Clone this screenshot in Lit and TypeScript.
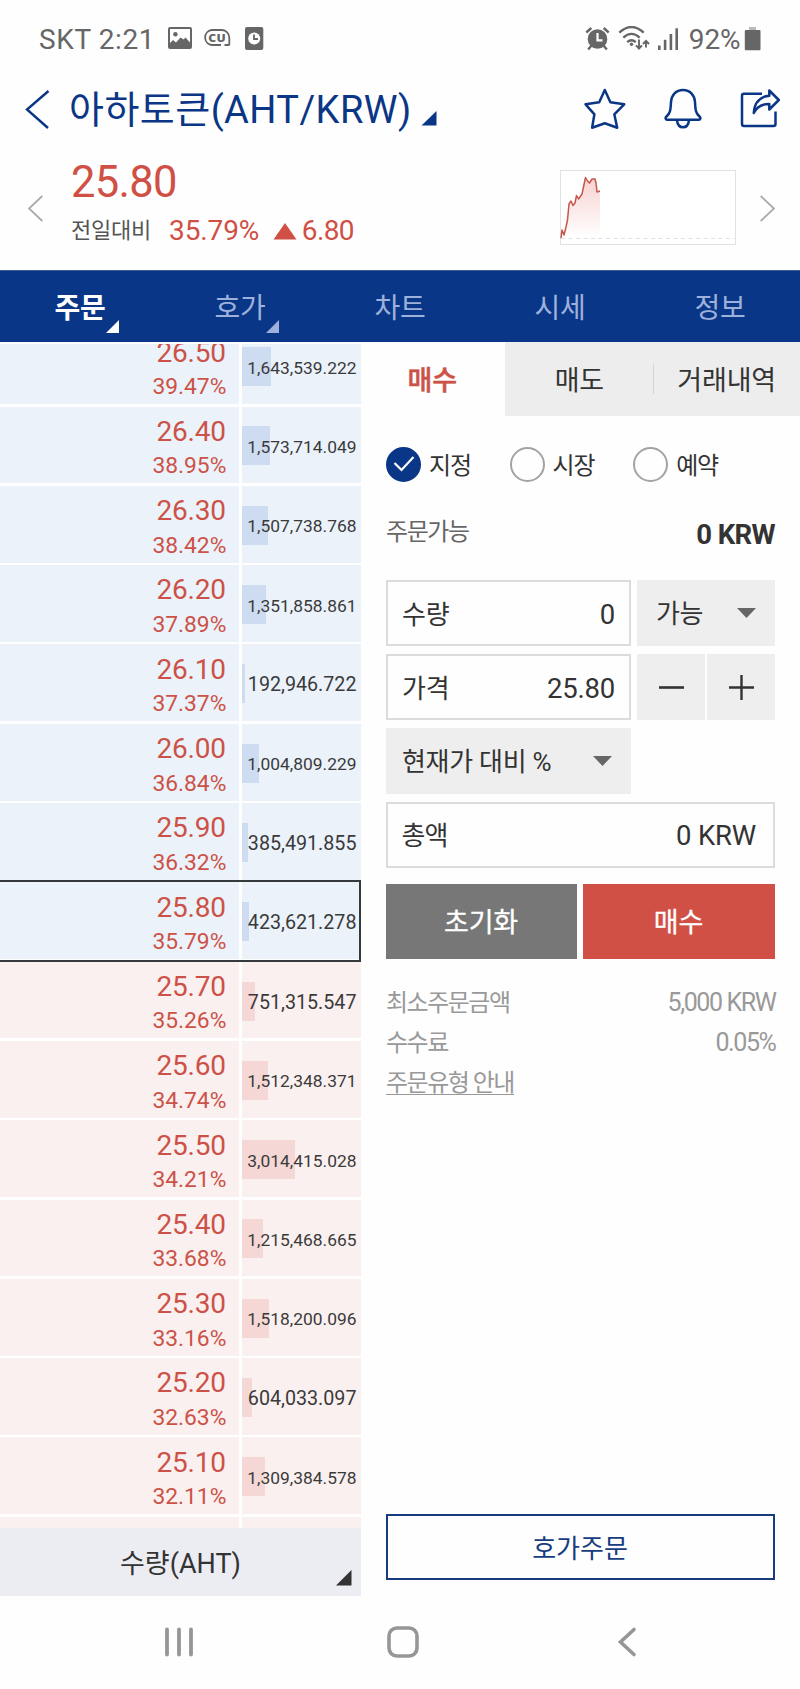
import { LitElement, html, css } from 'lit';
import { customElement, property, state } from 'lit/decorators.js';
import { classMap } from 'lit/directives/class-map.js';
import { styleMap } from 'lit/directives/style-map.js';

interface Level {
  price: string;
  rate: string;
  volume: string;
  side: 'ask' | 'bid';
  current?: boolean;
}

const LEVELS: Level[] = [
  { price: '26.50', rate: '39.47%', volume: '1,643,539.222', side: 'ask' },
  { price: '26.40', rate: '38.95%', volume: '1,573,714.049', side: 'ask' },
  { price: '26.30', rate: '38.42%', volume: '1,507,738.768', side: 'ask' },
  { price: '26.20', rate: '37.89%', volume: '1,351,858.861', side: 'ask' },
  { price: '26.10', rate: '37.37%', volume: '192,946.722', side: 'ask' },
  { price: '26.00', rate: '36.84%', volume: '1,004,809.229', side: 'ask' },
  { price: '25.90', rate: '36.32%', volume: '385,491.855', side: 'ask' },
  { price: '25.80', rate: '35.79%', volume: '423,621.278', side: 'ask', current: true },
  { price: '25.70', rate: '35.26%', volume: '751,315.547', side: 'bid' },
  { price: '25.60', rate: '34.74%', volume: '1,512,348.371', side: 'bid' },
  { price: '25.50', rate: '34.21%', volume: '3,014,415.028', side: 'bid' },
  { price: '25.40', rate: '33.68%', volume: '1,215,468.665', side: 'bid' },
  { price: '25.30', rate: '33.16%', volume: '1,518,200.096', side: 'bid' },
  { price: '25.20', rate: '32.63%', volume: '604,033.097', side: 'bid' },
  { price: '25.10', rate: '32.11%', volume: '1,309,384.578', side: 'bid' },
  { price: '', rate: '', volume: '', side: 'bid' },
];

/* Bar length in pixels per traded unit. */
const BAR_SCALE = 17.7e-6;

const CHART_LINE =
  'M561 238L562 230L564 235L566 227L567.500 220L569 204L571 201L573 205.500L575 203L576.500 195.500L578.500 199L582 194L585.500 177.500L587.500 181L589.500 183L592 179H595L596 183L597 192L600 191';

const base = css`
  * { box-sizing: border-box; }
  :host {
    display: block;
    font-family: Roboto, 'Noto Sans CJK KR', sans-serif;
    color: #333;
  }
  svg { display: block; flex: none; }
`;

@customElement('status-bar')
class StatusBar extends LitElement {
  static styles = [base, css`
    .bar { display: flex; align-items: center; height: 78px; padding: 0 38.500px 0 39px; color: #666; font-size: 28px; line-height: 40px; }
    .left, .right { display: flex; align-items: center; }
    .right { margin-left: auto; }
    .carrier { width: 129px; white-space: nowrap; letter-spacing: 0.600px; padding-top: 1px; }
    .cu { font: 800 11px 'Open Sans', sans-serif; letter-spacing: 0.2px; }
    .level { letter-spacing: -0.100px; margin: 0 3px 0 3px; padding-top: 1px; }
  `];
  render() {
    return html`<div class="bar">
      <div class="left">
        <span class="carrier">SKT 2:21</span>
        <svg width="96" height="26" viewBox="168 26 96 26">
          <path fill="#666" fill-rule="evenodd" d="M170 27h20q2 0 2 2v18q0 2-2 2h-20q-2 0-2-2V29q0-2 2-2zM170 29v14l3-3 3 2.500 4.500-5 3 2 2-2 4.500 5V29z"/>
          <circle cx="175.400" cy="34.300" r="2.200" fill="#666"/>
          <path fill="none" stroke="#666" stroke-width="1.800" d="M229.500 45h-5M229.300 45V37.500A7.600 7.600 0 0 0 222 30h-10.500a7.600 7.600 0 0 0 0 15H221"/>
          <text class="cu" x="208.300" y="41.700" fill="#666" textLength="17.500" lengthAdjust="spacingAndGlyphs">CU</text>
          <rect x="245" y="27" width="18.300" height="23" rx="2" fill="#666"/>
          <circle cx="254.200" cy="38.500" r="6" fill="#fff"/>
          <path fill="none" stroke="#666" stroke-width="1.800" d="M254 34.500v4.500h4"/>
        </svg>
      </div>
      <div class="right">
        <svg width="101" height="26" viewBox="584 25 101 26">
          <circle cx="596.500" cy="38" r="9.800" fill="#666"/>
          <path fill="none" stroke="#666" stroke-width="2.400" d="M585.300 31.500l5-4.500M607.700 31.500l-5-4.500M590.500 44.500l-3.300 4M602.500 44.500l3.300 4"/>
          <path fill="none" stroke="#fff" stroke-width="2.200" d="M596.500 32v7.300h5"/>
          <g fill="none" stroke="#666" stroke-width="2.300">
            <path d="M618.300 31.600q12.200-11.200 24.400 0M622.300 36.600q8.200-7.400 16.400 0M626.200 41.200q4.300-3.800 8.600 0"/>
            <path stroke-width="1.900" d="M638 38.500v8.500M635 44.300l3 3.200 3-3.200M645 46.500v-6.500M642 43l3-3.200 3 3.200"/>
          </g>
          <circle cx="630.500" cy="43.300" r="1.700" fill="#666"/>
          <g fill="#666"><rect x="657" y="44.500" width="2.600" height="4.500"/><rect x="662.800" y="38.800" width="2.600" height="10.200"/><rect x="668.600" y="33" width="2.600" height="16"/><rect x="674.400" y="27.300" width="2.600" height="21.700"/></g>
        </svg>
        <span class="level">92%</span>
        <svg width="18" height="26" viewBox="744.500 25 18 26">
          <rect x="749.500" y="26" width="7" height="4" fill="#bbb"/><rect x="745.300" y="29" width="15.700" height="20.200" rx="1" fill="#666"/>
        </svg>
      </div>
    </div>`;
  }
}

@customElement('title-bar')
class TitleBar extends LitElement {
  static styles = [base, css`
    .bar { display: flex; align-items: center; height: 62px; padding: 0 19px 0 25px; color: #0b3686; }
    .title { margin: 2px 0 0 19px; font-size: 38px; line-height: 50px; letter-spacing: 0.450px; white-space: nowrap; }
    .mark { margin: 18px 0 0 9px; }
    .actions { display: flex; gap: 38px; margin-left: auto; }
  `];
  render() {
    return html`<div class="bar">
      <svg width="25" height="40" viewBox="25 88 25 40"><path d="M48.500 90L27 108.500 48 127" fill="none" stroke="#0b3686" stroke-width="2.400"/></svg>
      <span class="title">아하토큰(AHT/KRW)</span>
      <svg class="mark" width="16" height="15"><path d="M0.500 14.500L15.500 0v14.500z" fill="#0b3686"/></svg>
      <div class="actions">
        <svg width="42" height="42" viewBox="584 88 42 42"><path d="M604.800 90l5.600 12.200 13.800 2.100-9.900 10 2.900 13.400-12.400-4.500-12.700 4.500 2.300-13.400-8.800-10 13.600-2.100z" fill="none" stroke="#0b3686" stroke-width="2.500" stroke-linejoin="round"/></svg>
        <svg width="38" height="42" viewBox="664 88 38 42"><g fill="none" stroke="#0b3686" stroke-width="2.500" stroke-linejoin="round"><path d="M683 90c-7 0-11.500 5-12 12-.4 8.500-1 11.500-4.500 14.500-1.600 1.500-.9 3.200.7 3.200h31.600c1.600 0 2.300-1.700.7-3.200-3.500-3-4.100-6-4.500-14.500-.5-7-5-12-12-12z"/><path d="M677 120.500c.6 4.300 2.700 6.800 6 6.800s5.400-2.500 6-6.800"/></g></svg>
        <svg width="41" height="42" viewBox="740 88 41 42"><g fill="none" stroke="#0b3686" stroke-width="2.500" stroke-linejoin="round"><path d="M762 93.700h-18q-2 0-2 2V124q0 2 2 2h29.500q2 0 2-2v-12.500"/><path d="M769.300 90.500l9.500 9.500-9.500 9.500v-5.500c-7.500 0-12.300 2.300-15.500 9 .5-9.500 5.500-16.500 15.500-17.200z"/></g></svg>
      </div>
    </div>`;
  }
}

@customElement('quote-summary')
class QuoteSummary extends LitElement {
  static styles = [base, css`
    .wrap { display: flex; height: 130.200px; padding: 0 25px 0 28px; align-items: flex-start; }
    .arrow { margin-top: 55px; }
    .info { margin-left: 28px; color: #d05045; }
    .price { font-size: 43.500px; line-height: 50px; margin-top: 18px; letter-spacing: -0.700px; }
    .change { display: flex; align-items: center; height: 34px; margin-top: 5.500px; font-size: 28px; line-height: 34px; letter-spacing: -0.100px; }
    .label { width: 98px; font-size: 22px; letter-spacing: -0.2px; color: #555; }
    .up { margin: 1px 4.500px 0 14px; }
    .chart { margin: 30px 24px 0 auto; }
    .diff { letter-spacing: -0.600px; }
  `];
  render() {
    return html`<div class="wrap">
      <svg class="arrow" width="15" height="28" viewBox="28 195 15 28"><path d="M42.300 196L29 208.500l13.300 12.500" fill="none" stroke="#aaa" stroke-width="1.800"/></svg>
      <div class="info">
        <div class="price">25.80</div>
        <div class="change">
          <span class="label">전일대비</span><span>35.79%</span>
          <svg class="up" width="24" height="17"><path d="M0.500 16.500L12 0l11.500 16.500z" fill="#d05045"/></svg>
          <span class="diff">6.80</span>
        </div>
      </div>
      <svg class="chart" width="176" height="75" viewBox="560 170 176 75">
        <defs><linearGradient id="g" x1="0" y1="0" x2="0" y2="1"><stop offset="0" stop-color="#f6d2cf"/><stop offset="1" stop-color="#fff"/></linearGradient></defs>
        <rect x="560.500" y="170.500" width="175" height="74" fill="#fff" stroke="#e2e2e2"/>
        <path d="${CHART_LINE} V234H561z" fill="url(#g)"/>
        <path d="M561 238.500h174" stroke="#e2e2e2" stroke-dasharray="4 3.500"/>
        <path d="${CHART_LINE}" fill="none" stroke="#c7564e" stroke-width="1.500" stroke-linejoin="round"/>
      </svg>
      <svg class="arrow" width="15" height="28" viewBox="760 195 15 28"><path d="M760.700 196L774 208.500 760.700 221" fill="none" stroke="#aaa" stroke-width="1.800"/></svg>
    </div>`;
  }
}

@customElement('main-tabs')
class MainTabs extends LitElement {
  @state() private active = 0;
  static styles = [base, css`
    .tabs { display: grid; grid-template-columns: repeat(5, 1fr); height: 72.100px; background: #093687; border-top: 1px solid #3b5b96; }
    .tab { position: relative; display: flex; justify-content: center; align-items: center; font-size: 28px; line-height: 40px; letter-spacing: -0.2px; color: #9db1dc; padding: 5.500px 0 0 0; }
    .on { color: #fff; font-weight: 700; }
    .mark { position: absolute; left: 106px; bottom: 9px; }
  `];
  render() {
    return html`<div class="tabs">${['주문', '호가', '차트', '시세', '정보'].map((t, i) => html`
      <div class=${classMap({ tab: true, on: i === this.active })} @click=${() => (this.active = i)}>${t}
        ${i < 2 ? html`<svg class="mark" width="13" height="13"><path d="M0 13L13 0v13z" fill="currentColor"/></svg>` : ''}
      </div>`)}</div>`;
  }
}

@customElement('order-book')
class OrderBook extends LitElement {
  @property({ attribute: false }) levels: Level[] = LEVELS;
  static styles = [base, css`
    :host { width: 361px; display: flex; flex-direction: column; padding-top: 1.700px; }
    .list { height: 1183.700px; overflow: hidden; }
    .rows { margin-top: -16.700px; }
    .row { position: relative; display: grid; grid-template-columns: 239.400px 119.300px; grid-template-rows: 76.800px; column-gap: 2.300px; margin-bottom: 2.500px; }
    .row.current::after { content: ''; position: absolute; inset: -2.500px 0 -2.500px -4px; border: 2px solid #363a3c; }
    .ask > * { background: #ebf2fa; }
    .bid > * { background: #faf0ef; }
    .quote { padding: 8.300px 13.500px 0 0; text-align: right; color: #cc5248; }
    .price { font-size: 28px; line-height: 34px; letter-spacing: -0.2px; }
    .rate { font-size: 22.800px; line-height: 30px; margin: 2.500px -0.500px 0 0; }
    .depth { display: grid; align-items: center; color: #3a3a3a; }
    .depth > * { grid-area: 1 / 1; }
    .bar { height: 39px; margin-top: 2px; }
    .ask .bar { background: #cddcf0; }
    .bid .bar { background: #f5d7d5; }
    .volume { position: relative; justify-self: end; padding-right: 4.500px; font-size: 19.700px; line-height: 24px; margin-top: 5px; }
    .volume.long { font-size: 17.400px; margin-top: 4px; }
    .unit { position: relative; display: flex; justify-content: center; align-items: center; height: 68px; background: #ecedf2; font-size: 27px; line-height: 36px; padding: 4px 0 0 0; }
    .mark { position: absolute; right: 9.500px; bottom: 10px; }
  `];
  render() {
    return html`
      <div class="list"><div class="rows">${this.levels.map((l) => html`
        <div class=${classMap({ row: true, [l.side]: true, current: !!l.current })}>
          <div class="quote"><div class="price">${l.price}</div><div class="rate">${l.rate}</div></div>
          <div class="depth">
            <div class="bar" style=${styleMap({ width: `${(Number(l.volume.replace(/,/g, '')) * BAR_SCALE).toFixed(1)}px` })}></div>
            <span class=${classMap({ volume: true, long: l.volume.length > 11 })}>${l.volume}</span>
          </div>
        </div>`)}</div></div>
      <div class="unit">수량(AHT)<svg class="mark" width="16" height="16"><path d="M0 15.500L15.500 0v15.500z" fill="#333"/></svg></div>`;
  }
}

@customElement('order-form')
class OrderForm extends LitElement {
  @state() private kind = 0;
  static styles = [base, css`
    :host { flex: 1; display: flex; flex-direction: column; }
    .tabs { display: grid; grid-template-columns: 144.300px 148px 1fr; height: 73.700px; font-size: 27px; line-height: 36px; }
    .tabs div { position: relative; display: flex; align-items: center; justify-content: center; background: #ededed; padding-top: 4.500px; letter-spacing: -0.2px; }
    .tabs .on { background: transparent; color: #cc5248; font-weight: 500; -webkit-text-stroke: 0.500px #cc5248; padding-right: 2px; }
    .tabs .split::before { content: ''; position: absolute; left: 0; top: 22px; width: 1px; height: 30px; background: #d6d6d6; }
    .body { padding: 0 25px; display: flex; flex-direction: column; }
    .kinds { display: flex; margin-top: 31px; height: 35px; }
    .kind { display: flex; align-items: center; width: 123.600px; font-size: 24px; line-height: 34px; letter-spacing: -1.200px; gap: 8px; }
    .kind .name { padding-top: 3px; }
    .dot { width: 35px; height: 35px; border-radius: 50%; border: 2px solid #a3a3a3; display: flex; align-items: center; justify-content: center; }
    .dot.on { background: #093687; border-color: #093687; }
    .avail { display: flex; justify-content: space-between; margin-top: 33px; height: 40px; line-height: 35px; font-size: 24px; letter-spacing: -1.400px; color: #666; }
    .avail b { font-size: 27.500px; line-height: 40px; letter-spacing: -0.600px; color: #333; }
    .grid { display: grid; grid-template-columns: 245px 138px; column-gap: 6px; row-gap: 8px; grid-auto-rows: 66px; margin-top: 25px; font-size: 26px; line-height: 36px; }
    .grid > * { display: flex; align-items: center; }
    .field { border: 2px solid #dcdcdc; justify-content: space-between; padding: 4px 14px 0 14px; letter-spacing: -0.200px; }
    .field .num { font-size: 27.500px; }
    .steps { gap: 2.500px; }
    .select, .step { background: #eee; }
    .select { justify-content: space-between; padding: 3px 19.500px 0 16px; letter-spacing: -0.300px; }
    .select.unit { padding-left: 19px; }
    .select svg { margin-top: -3px; }
    .step { flex: 1; height: 66px; display: flex; align-items: center; justify-content: center; padding: 1px 0 0 1px; }
    .total { grid-column: 1 / 3; letter-spacing: -0.900px; padding: 3px 17px 0 13.500px; }
    .total .num { letter-spacing: -0.200px; }
    .buttons { display: grid; grid-template-columns: 191px 1fr; gap: 6px; margin-top: 16.500px; height: 74.500px; font-size: 27px; line-height: 36px; color: #fff; }
    .buttons div { display: flex; align-items: center; justify-content: center; padding: 3px 1px 0 0; letter-spacing: -0.2px; -webkit-text-stroke: 0.300px #fff; }
    .reset { background: #777; }
    .buy { background: #d05045; }
    .notes { margin-top: 24px; color: #999; font-size: 24px; letter-spacing: -1.500px; }
    .note { display: flex; justify-content: space-between; height: 40.300px; line-height: 40px; white-space: nowrap; }
    .note .val { font-size: 25px; letter-spacing: -1.400px; margin-right: -0.500px; }
    .link { border-bottom: 1.500px solid #999; height: 31px; line-height: 38px; }
    .book { margin: auto 25px 15.700px 25px; height: 66px; border: 2px solid #173c80; color: #173c80; font-size: 26px; line-height: 36px; display: flex; align-items: center; justify-content: center; padding: 4px 1px 0 0; }
  `];
  private caret() {
    return html`<svg width="19" height="10"><path d="M0 0h19L9.500 10z" fill="#666"/></svg>`;
  }
  render() {
    return html`
      <div class="tabs"><div class="on">매수</div><div>매도</div><div class="split">거래내역</div></div>
      <div class="body">
        <div class="kinds">${['지정', '시장', '예약'].map((k, i) => html`
          <div class="kind" @click=${() => (this.kind = i)}>
            <span class=${classMap({ dot: true, on: i === this.kind })}>${i === this.kind
              ? html`<svg width="22" height="18"><path d="M1.500 8l7 7L20.500 2" fill="none" stroke="#fff" stroke-width="2.200"/></svg>` : ''}</span>
            <span class="name">${k}</span>
          </div>`)}</div>
        <div class="avail"><span>주문가능</span><b>0 KRW</b></div>
        <div class="grid">
          <div class="field"><span>수량</span><span class="num">0</span></div>
          <div class="select unit">가능${this.caret()}</div>
          <div class="field"><span>가격</span><span class="num">25.80</span></div>
          <div class="steps">
            <div class="step"><svg width="25" height="25"><path d="M0 12.500h25" stroke="#333" stroke-width="2.600"/></svg></div>
            <div class="step"><svg width="25" height="25"><path d="M0 12.500h25M12.500 0v25" stroke="#333" stroke-width="2.400"/></svg></div>
          </div>
          <div class="select">현재가 대비 %${this.caret()}</div><span></span>
          <div class="field total"><span>총액</span><span class="num">0 KRW</span></div>
        </div>
        <div class="buttons"><div class="reset">초기화</div><div class="buy">매수</div></div>
        <div class="notes">
          <div class="note"><span>최소주문금액</span><span class="val">5,000 KRW</span></div>
          <div class="note"><span>수수료</span><span class="val">0.05%</span></div>
          <div class="note"><span class="link">주문유형 안내</span></div>
        </div>
      </div>
      <div class="book">호가주문</div>`;
  }
}

@customElement('system-nav')
class SystemNav extends LitElement {
  static styles = [base, css`
    .nav { display: grid; grid-template-columns: 1fr 1fr 1fr; height: 93px; padding: 0 61px 0 67px; justify-items: center; align-items: center; }
  `];
  render() {
    const c = '#969696';
    return html`<div class="nav">
      <svg width="30" height="32"><path d="M3 3.500v25M15 3.500v25M27 3.500v25" stroke=${c} stroke-width="3.800" stroke-linecap="round"/></svg>
      <svg width="34" height="34"><rect x="3" y="3" width="28" height="28" rx="8" fill="none" stroke=${c} stroke-width="3.600"/></svg>
      <svg width="20" height="32"><path d="M17 3.500L3.500 16 17 28.500" fill="none" stroke=${c} stroke-width="3.600" stroke-linecap="round"/></svg>
    </div>`;
  }
}

@customElement('app-root')
class AppRoot extends LitElement {
  static styles = [base, css`
    :host { width: 800px; height: 1689px; background: #fefefe; overflow: hidden; }
    .work { display: flex; height: 1253.500px; }
  `];
  render() {
    return html`
      <status-bar></status-bar>
      <title-bar></title-bar>
      <quote-summary></quote-summary>
      <main-tabs></main-tabs>
      <div class="work"><order-book></order-book><order-form></order-form></div>
      <system-nav></system-nav>`;
  }
}
